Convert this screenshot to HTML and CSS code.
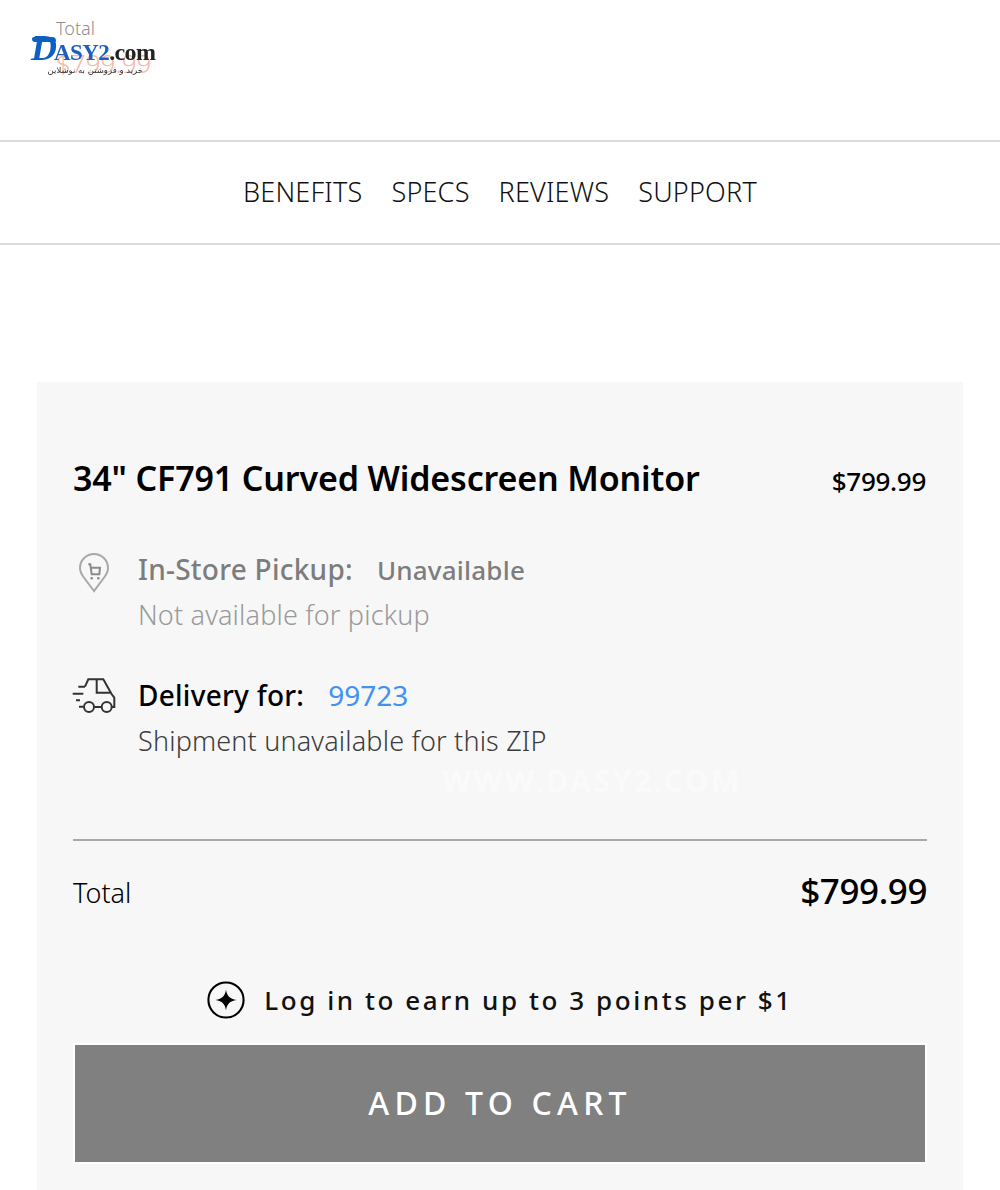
FILE: index.html
```html
<!DOCTYPE html>
<html lang="en">
<head>
<meta charset="utf-8">
<title>34" CF791 Curved Widescreen Monitor</title>
<link rel="stylesheet" href="styles.css">
</head>
<body>
<header class="top">
  <div class="ghost">
    <div class="ghost-label">Total</div>
    <div class="ghost-price">$799.99</div>
  </div>
  <div class="logo">
    <div class="logo-main"><span class="logo-d">D</span><span class="logo-asy">ASY2</span><span class="logo-com">.com</span></div>
    <div class="logo-sub" dir="rtl">خرید و فروشتن به نوشلاین</div>
  </div>
</header>
<nav class="nav">
  <a>BENEFITS</a><a>SPECS</a><a>REVIEWS</a><a>SUPPORT</a>
</nav>
<main class="card">
  <div class="title-row">
    <h1>34" CF791 Curved Widescreen Monitor</h1>
    <span class="title-price">$799.99</span>
  </div>
  <section class="option pickup">
    <svg class="opt-icon" viewBox="0 0 44 44" width="44" height="44" fill="none" stroke="#a8a8a8" stroke-width="2">
      <path d="M22 40 L11.500 26 C9 22.500 8 20 8 17 C8 9 14.500 3 22 3 C29.500 3 36 9 36 17 C36 20 35 22.500 32.500 26 Z"/>
      <path d="M16.300 13.300 H18.300 L19.700 23.300 H27.300 L28 16.700 H18.700" stroke="#8a8a8a"/>
      <circle cx="19.700" cy="27.300" r="1.300" fill="#8a8a8a" stroke="none"/><circle cx="26.300" cy="27.300" r="1.300" fill="#8a8a8a" stroke="none"/>
    </svg>
    <div class="opt-text">
      <div class="opt-head"><b>In-Store Pickup:</b><span class="status">Unavailable</span></div>
      <div class="opt-sub">Not available for pickup</div>
    </div>
  </section>
  <section class="option delivery">
    <svg class="opt-icon" viewBox="0 0 44 44" width="44" height="44" fill="none" stroke="#333" stroke-width="2">
      <path d="M13 10.700 L16.300 3.300 H31.300 L39.700 18.300 L42.300 21.700 V31 H40"/>
      <path d="M24.700 4 V16.700 H38"/>
      <path d="M6.300 10.700 H13 M.7 17.700 H11.300 M4 24.300 H8 M7 30.700 H11.500"/>
      <path d="M22.500 31 H29.500"/>
      <circle cx="17" cy="31" r="5"/><circle cx="34.700" cy="31" r="5"/>
    </svg>
    <div class="opt-text">
      <div class="opt-head"><b>Delivery for:</b><a class="zip">99723</a></div>
      <div class="opt-sub dark">Shipment unavailable for this ZIP</div>
    </div>
  </section>
  <div class="watermark">WWW.DASY2.COM</div>
  <div class="total-row">
    <span class="total-label">Total</span>
    <span class="total-price">$799.99</span>
  </div>
  <div class="points">
    <svg viewBox="0 0 40 40" width="38" height="38" fill="none">
      <circle cx="20" cy="20" r="18.500" stroke="#000" stroke-width="2.200"/>
      <path d="M20 9 C20.800 15.500 24 19 31 20 C24 21 20.800 24.500 20 31 C19.200 24.500 16 21 9 20 C16 19 19.200 15.500 20 9 Z" fill="#000"/>
    </svg>
    <span>Log in to earn up to 3 points per $1</span>
  </div>
  <button class="cart" type="button">ADD TO CART</button>
</main>
</body>
</html>
```
FILE: styles.css
```css
* { box-sizing: border-box; }
html, body { margin: 0; padding: 0; background: #fff; }
body {
  width: 1000px;
  height: 1190px;
  overflow: hidden;
  font-family: "Noto Sans", "Open Sans", sans-serif;
  color: #000;
}
.top { position: relative; height: 140px; }
.ghost { position: absolute; left: 56px; top: 17px; font-weight: 300; }
.ghost-label { font-size: 18px; line-height: 22px; color: #8f8f8f; }
.ghost-price { font-size: 26px; line-height: 34px; margin-top: 7px; color: #f2b9a8; }
.logo { position: absolute; left: 31px; top: 33px; width: 128px; filter: blur(.35px); }
.logo-main { position: relative; display: flex; align-items: baseline; font-family: "Liberation Serif", serif; font-weight: 700; line-height: 30px; }
.logo-main::before { content: ""; position: absolute; left: 1px; top: 4px; width: 24px; height: 5px; background: #0d5fc4; border-radius: 2px 4px 1px 3px; }
.logo-d { color: #0d5fc4; font-size: 36px; font-style: italic; }
.logo-asy { color: #1c5fc0; font-size: 23px; margin-left: -3px; letter-spacing: -.6px; }
.logo-com { color: #222; font-size: 24px; letter-spacing: -.6px; }
.logo-sub { font-family: "DejaVu Sans", sans-serif; font-size: 8.500px; line-height: 11px; margin: -3px 16px 0 13px; color: #333; white-space: nowrap; }
.nav {
  height: 105px;
  padding-bottom: 2px;
  border-top: 2px solid #dcdcdc;
  border-bottom: 2px solid #dcdcdc;
  display: flex;
  justify-content: center;
  align-items: center;
  gap: 29px;
  font-size: 27px;
  font-weight: 300;
  letter-spacing: .2px;
  color: #111;
}
.card {
  position: relative;
  width: 926px;
  height: 808px;
  margin: 137px 0 0 37px;
  padding: 71px 36px 0;
  background: #f7f7f7;
}
.title-row { display: flex; justify-content: space-between; align-items: baseline; }
h1 { margin: 0; font-size: 34px; line-height: 50px; font-weight: 600; letter-spacing: -.15px; }
.title-price { font-size: 26px; font-weight: 500; letter-spacing: -.3px; margin-right: 1px; }
.option { display: flex; gap: 22px; }
.pickup { margin-top: 43px; }
.delivery { margin-top: 36px; }
.opt-icon { flex: none; margin-top: 5px; margin-left: -1px; }
.delivery .opt-icon { margin-top: 3px; }
.opt-head { font-size: 28px; line-height: 46px; display: flex; align-items: baseline; gap: 24px; }
.delivery .opt-head { margin: -1px 0 1px; }
.opt-head b { font-weight: 500; letter-spacing: .25px; }
.pickup .opt-head { color: #7d7d7d; }
.status { font-size: 26px; font-weight: 500; letter-spacing: .2px; }
.zip { color: #3f92f0; font-weight: 400; }
.opt-sub { font-size: 27px; line-height: 44px; font-weight: 300; letter-spacing: .17px; color: #9a9a9a; }
.opt-sub.dark { color: #3c3c3c; }
.watermark {
  position: absolute;
  left: 405px;
  top: 378px;
  font-size: 30px;
  font-weight: 700;
  letter-spacing: 2.600px;
  color: #fafafa;
}
.total-row {
  margin-top: 76px;
  border-top: 2px solid #a8a8a8;
  padding-top: 24px;
  display: flex;
  justify-content: space-between;
  align-items: flex-start;
}
.total-label { font-size: 27px; line-height: 36px; margin-top: 10px; font-weight: 300; }
.total-price { font-size: 35px; line-height: 48px; margin-top: 2px; font-weight: 500; letter-spacing: -.4px; }
.points {
  display: flex;
  justify-content: center;
  align-items: center;
  gap: 19px;
  margin-top: 66px;
  font-size: 26px;
  font-weight: 500;
  letter-spacing: 2.570px;
  color: #111;
}
.cart {
  display: block;
  width: 854px;
  height: 121px;
  margin: 24px 0 0;
  padding: 0 0 2px;
  background: #808080;
  border: 2px solid #fff;
  color: #fff;
  font-family: inherit;
  font-size: 32px;
  font-weight: 500;
  letter-spacing: 5.200px;
}
```
